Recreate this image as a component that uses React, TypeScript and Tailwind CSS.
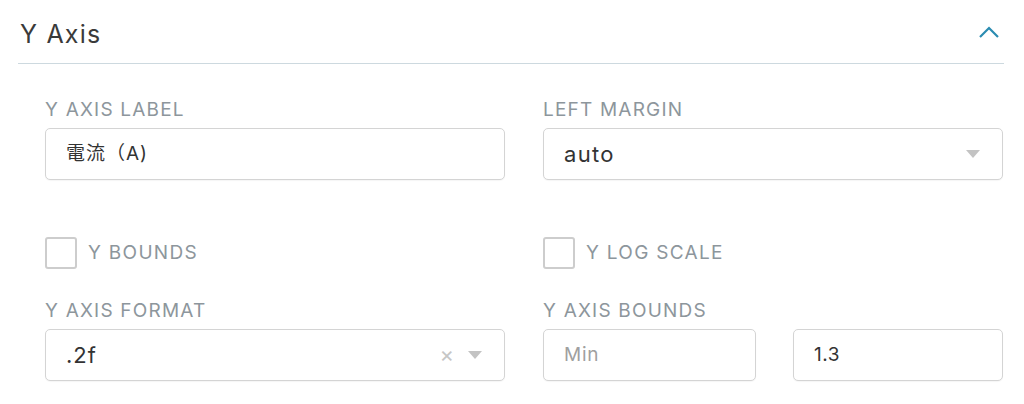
import { useState } from "react";

const font = { fontFamily: "Inter, 'Noto Sans CJK JP', sans-serif" };

const Caret = () => (
  <svg width="14" height="8" viewBox="0 0 14 8" className="shrink-0">
    <path d="M0 0h14L7 8z" fill="#c3c3c3" />
  </svg>
);

const Label = ({ children }: { children: React.ReactNode }) => (
  <div className="mb-2 h-5 text-[19px] leading-5 text-[#8d969c] tracking-[1.2px]">{children}</div>
);

const Box = ({ children, className = "" }: { children: React.ReactNode; className?: string }) => (
  <div className={`flex h-[52px] items-center rounded-[5px] border border-[#d4d4d4] bg-white pl-5 pr-[22px] shadow-[0_1px_1px_rgba(0,0,0,0.04)] ${className}`}>
    {children}
  </div>
);

const Check = ({ label }: { label: string }) => {
  const [on, setOn] = useState(false);
  return (
    <label className="flex h-8 cursor-pointer items-center gap-[11px]">
      <span
        onClick={() => setOn(!on)}
        className={`h-8 w-8 rounded-[3px] border-2 ${on ? "border-[#1a85a0] bg-[#1a85a0]" : "border-[#cdcdcd] bg-white"}`}
      />
      <span className="text-[19px] text-[#8d969c] tracking-[1.3px]">{label}</span>
    </label>
  );
};

export default function App() {
  return (
    <div className="h-[404px] w-[1024px] overflow-hidden bg-white" style={font}>
      <div className="ml-[18px] mr-[20px] flex h-[64px] items-center justify-between border-b border-[#cdd9df] pt-[7px]">
        <span className="pl-[2px] text-[25px] text-[#3a3a3a] tracking-[1.2px]">Y Axis</span>
        <svg width="22" height="14" viewBox="0 0 22 14" className="mr-[4px] mb-[6px]">
          <path d="M2 12L11 3l9 9" fill="none" stroke="#2b8cb1" strokeWidth="2.2" />
        </svg>
      </div>

      <div className="grid grid-cols-2 gap-x-[38px] pl-[45px] pr-[21px] pt-[36px]">
        <div>
          <Label>Y AXIS LABEL</Label>
          <Box>
            <span className="text-[19px] text-[#333] tracking-[1px]">電流（A)</span>
          </Box>
        </div>
        <div>
          <Label>LEFT MARGIN</Label>
          <Box className="justify-between">
            <span className="text-[22px] text-[#333] tracking-[1.3px]">auto</span>
            <Caret />
          </Box>
        </div>

        <div className="mt-[57px]">
          <Check label="Y BOUNDS" />
        </div>
        <div className="mt-[57px]">
          <Check label="Y LOG SCALE" />
        </div>

        <div className="mt-[32px]">
          <Label>Y AXIS FORMAT</Label>
          <Box className="justify-between">
            <span className="text-[22px] text-[#333] tracking-[1px]">.2f</span>
            <div className="flex items-center gap-[14px]">
              <span className="pb-[3px] text-[22px] leading-none text-[#c6c6c6]">×</span>
              <Caret />
            </div>
          </Box>
        </div>
        <div className="mt-[32px]">
          <Label>Y AXIS BOUNDS</Label>
          <div className="flex gap-[37px]">
            <Box className="w-[213px]">
              <span className="text-[19px] text-[#a0a0a0] tracking-[0.8px]">Min</span>
            </Box>
            <Box className="flex-1">
              <span className="text-[19px] text-[#333] tracking-[0.5px]">1.3</span>
            </Box>
          </div>
        </div>
      </div>
    </div>
  );
}
